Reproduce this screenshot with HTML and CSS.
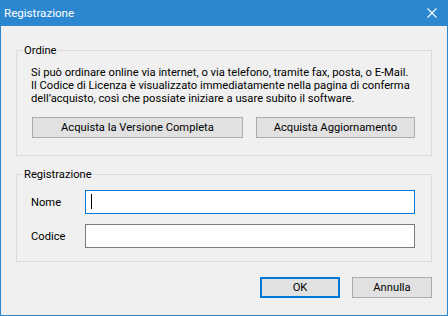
FILE: index.html
```html
<!DOCTYPE html>
<html>
<head>
<meta charset="utf-8">
<link rel="stylesheet" href="styles.css">
</head>
<body>
<div class="window">
  <div class="titlebar">
    <span class="title">Registrazione</span>
    <svg class="close" width="10" height="10" viewBox="0 0 10 10"><path d="M0.5 0.5L9.5 9.5M9.5 0.5L0.5 9.5" stroke="#fff" stroke-width="1.1" fill="none"/></svg>
  </div>
  <div class="content">
    <div class="group order">
      <span class="legend">Ordine</span>
      <p class="info">Si può ordinare online via internet, o via telefono, tramite fax, posta, o E-Mail.<br>Il Codice di Licenza è visualizzato immediatamente nella pagina di conferma<br>dell’acquisto, così che possiate iniziare a usare subito il software.</p>
      <div class="buy-row">
        <button class="btn btn-full">Acquista la Versione Completa</button>
        <button class="btn btn-upd">Acquista Aggiornamento</button>
      </div>
    </div>
    <div class="group reg">
      <span class="legend">Registrazione</span>
      <div class="field">
        <label class="lbl">Nome</label>
        <div class="input focused"><span class="caret"></span></div>
      </div>
      <div class="field">
        <label class="lbl">Codice</label>
        <div class="input"></div>
      </div>
    </div>
    <div class="actions">
      <button class="btn btn-ok">OK</button>
      <button class="btn btn-cancel">Annulla</button>
    </div>
  </div>
</div>
</body>
</html>
```
FILE: styles.css
```css
* { box-sizing: border-box; }
html, body { margin: 0; padding: 0; }
body {
  width: 448px;
  height: 316px;
  font-family: Roboto, "Liberation Sans", sans-serif;
  font-size: 11.2px;
  color: #000;
  background: #f0f0f0;
}
.window {
  width: 448px;
  height: 316px;
  display: flex;
  flex-direction: column;
}
.titlebar {
  height: 26px;
  flex: none;
  background: #2b88d0;
  display: flex;
  align-items: center;
  justify-content: space-between;
  padding: 0 11px 0 4px;
  color: #fff;
}
.title { font-size: 11.6px; line-height: 16px; }
.close { display: block; }
.content {
  flex: 1;
  background: #f0f0f0;
  border: 1px solid #2b88d0;
  border-top: 0;
  padding: 0 15px;
  display: flex;
  flex-direction: column;
}
.group {
  border: 1px solid #dcdcdc;
  display: flex;
  flex-direction: column;
}
.legend {
  align-self: flex-start;
  margin: -8px 0 0 -8px;
  padding: 0 1px;
  background: #f0f0f0;
  line-height: 15px;
}
.order {
  margin-top: 24px;
  height: 106px;
  padding: 0 16px 0 14px;
}
.info {
  margin: 8px 0 0;
  line-height: 13px;
  white-space: nowrap;
}
.buy-row {
  display: flex;
  gap: 13px;
  margin: 12px 0 0 1px;
}
.btn {
  font-family: inherit;
  font-size: 11.2px;
  color: #000;
  background: #e1e1e1;
  border: 1px solid #adadad;
  height: 21px;
  padding: 0;
  line-height: 17px;
}
.btn-full { width: 212px; }
.btn-upd { width: 160px; }
.reg {
  margin-top: 18px;
  height: 88px;
  padding: 0 16px 0 14px;
}
.field {
  display: flex;
  align-items: center;
}
.field:first-of-type { margin-top: 8px; }
.field + .field { margin-top: 10px; }
.lbl { width: 54px; }
.input {
  width: 331px;
  height: 24px;
  background: #fff;
  border: 1px solid #7a7a7a;
  padding: 3px 0 0 5px;
}
.input.focused { border-color: #0078d7; }
.caret {
  display: block;
  width: 1px;
  height: 15px;
  background: #000;
}
.actions {
  display: flex;
  justify-content: flex-end;
  gap: 12px;
  margin-top: 15px;
}
.btn-ok, .btn-cancel { width: 80px; }
.btn-ok { border: 2px solid #0078d7; }
```
